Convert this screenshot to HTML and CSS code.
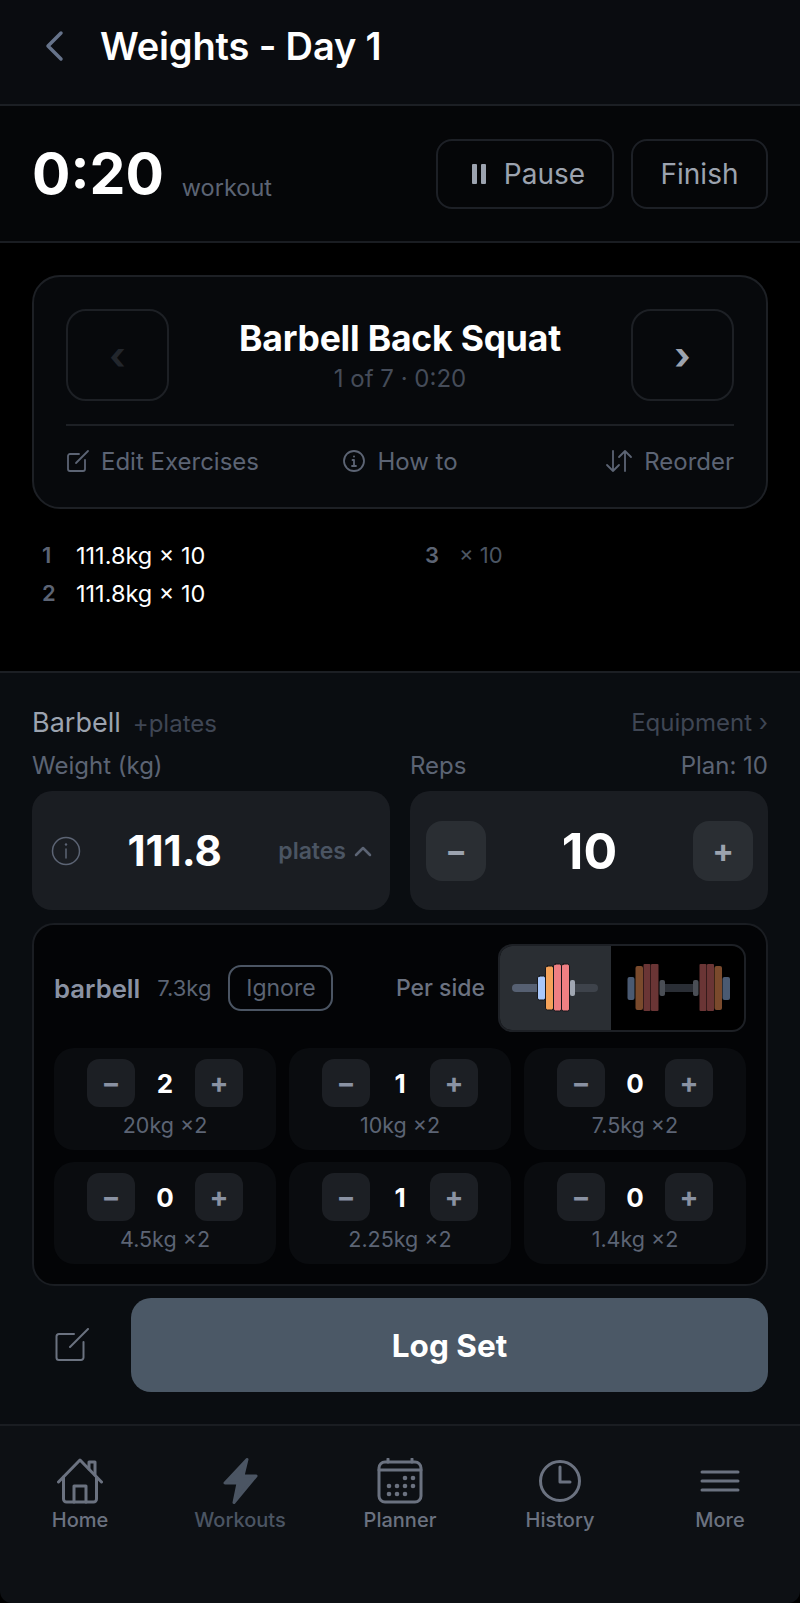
FILE: index.html
```html
<!DOCTYPE html>
<html lang="en">

<head>
    <meta charset="UTF-8">
    <meta name="viewport" content="width=device-width, initial-scale=1.0">
    <title>Weights - Day 1</title>

    <link rel="stylesheet" href="styles.css">
</head>

<body>
    <div class="app">
        <header class="topbar">
            <svg class="back-icon" width="20" height="32" viewBox="0 0 20 32"><path d="M17 3 L4 16 L17 29"/></svg>
            <h1>Weights - Day 1</h1>
        </header>

        <section class="timer-row">
            <div class="timer">
                <span class="timer-value">0:20</span>
                <span class="timer-label">workout</span>
            </div>
            <div class="timer-actions">
                <button class="outline-btn pause-btn"><span class="pause-icon"><i></i><i></i></span>Pause</button>
                <button class="outline-btn finish-btn">Finish</button>
            </div>
        </section>

        <main class="exercise-area">
            <div class="exercise-card">
                <div class="exercise-head">
                    <button class="nav-btn prev">‹</button>
                    <div class="exercise-title">
                        <h2>Barbell Back Squat</h2>
                        <p>1 of 7 · 0:20</p>
                    </div>
                    <button class="nav-btn next">›</button>
                </div>
                <div class="exercise-links">
                    <span class="link">
                        <svg width="24" height="24" viewBox="0 0 24 24"><path d="M13 5 H4 A2 2 0 0 0 2 7 V20 A2 2 0 0 0 4 22 H17 A2 2 0 0 0 19 20 V11"/><path d="M10 14 L22 2"/></svg>
                        Edit Exercises
                    </span>
                    <span class="link">
                        <svg width="24" height="24" viewBox="0 0 24 24"><circle cx="12" cy="12" r="10"/><path d="M12 11 V17 M10 17 H14 M10.500 11 H12"/><circle class="dot" cx="12" cy="7.500" r="1"/></svg>
                        How to
                    </span>
                    <span class="link link-right">
                        <svg width="28" height="24" viewBox="0 0 28 24"><path d="M8 2 V22 M2 16 L8 22 L14 16"/><path d="M20 22 V2 M14 8 L20 2 L26 8"/></svg>
                        Reorder
                    </span>
                </div>
            </div>

            <div class="sets">
                <div class="set"><span class="set-num">1</span><span class="set-val">111.8kg × 10</span></div>
                <div class="set"><span class="set-num">3</span><span class="set-val muted">× 10</span></div>
                <div class="set"><span class="set-num">2</span><span class="set-val">111.8kg × 10</span></div>
            </div>
        </main>

        <section class="log-panel">
            <div class="equip-row">
                <div><span class="equip-name">Barbell</span><span class="equip-extra">+plates</span></div>
                <span class="equip-link">Equipment ›</span>
            </div>

            <div class="inputs">
                <div class="input-col">
                    <div class="input-label"><span>Weight (kg)</span></div>
                    <div class="input-box weight-box">
                        <svg class="info-icon" width="30" height="30" viewBox="0 0 30 30"><circle cx="15" cy="15" r="13.500"/><path d="M15 13 V22"/><circle class="dot" cx="15" cy="8.500" r="1.200"/></svg>
                        <span class="weight-value">111.8</span>
                        <span class="plates-toggle">plates
                            <svg width="18" height="12" viewBox="0 0 18 12"><path d="M2 10 L9 3 L16 10"/></svg>
                        </span>
                    </div>
                </div>
                <div class="input-col">
                    <div class="input-label"><span>Reps</span><span>Plan: 10</span></div>
                    <div class="input-box reps-box">
                        <button class="step-btn">−</button>
                        <span class="reps-value">10</span>
                        <button class="step-btn">+</button>
                    </div>
                </div>
            </div>

            <div class="plates-card">
                <div class="plates-head">
                    <div class="bar-info">
                        <span class="bar-name">barbell</span>
                        <span class="bar-weight">7.3kg</span>
                        <button class="ignore-btn">Ignore</button>
                    </div>
                    <div class="side-info">
                        <span class="side-label">Per side</span>
                        <div class="side-toggle">
                            <div class="side-opt active">
                                <svg width="113" height="88" viewBox="0 0 113 88">
                                    <rect x="14" y="40" width="30" height="8" rx="4" fill="#566072" stroke="none"/>
                                    <rect x="70" y="40" width="30" height="8" rx="4" fill="#3e434b" stroke="none"/>
                                    <rect x="39.500" y="32" width="8" height="24" rx="2" fill="#a9c8fb"/>
                                    <rect x="47.500" y="22" width="8" height="44" rx="2" fill="#f4a259"/>
                                    <rect x="55.500" y="20" width="8" height="47" rx="2" fill="#ee7f83"/>
                                    <rect x="63.500" y="20" width="8" height="47" rx="2" fill="#ee7f83"/>
                                    <rect x="72" y="36" width="5" height="16" rx="2" fill="#a0a6b2" stroke="none"/>
                                </svg>
                            </div>
                            <div class="side-opt">
                                <svg width="134" height="88" viewBox="0 0 134 88">
                                    <rect x="50" y="40" width="36" height="8" fill="#2a2e35"/>
                                    <rect x="16.500" y="33" width="7" height="23" rx="2" fill="#4a5a72"/>
                                    <rect x="24.500" y="22" width="7.500" height="44" rx="2" fill="#7a4a2c"/>
                                    <rect x="32.500" y="20" width="7" height="47" rx="1" fill="#6a3535"/>
                                    <rect x="40" y="20" width="7.500" height="47" rx="1" fill="#6a3535"/>
                                    <rect x="48.500" y="36" width="5.500" height="16" rx="2" fill="#4a4e55"/>
                                    <rect x="82" y="36" width="5.500" height="16" rx="2" fill="#4a4e55"/>
                                    <rect x="88.500" y="20" width="7" height="47" rx="1" fill="#6a3535"/>
                                    <rect x="96" y="20" width="7" height="47" rx="1" fill="#6a3535"/>
                                    <rect x="103.500" y="22" width="7.500" height="44" rx="2" fill="#7a4a2c"/>
                                    <rect x="111.500" y="33" width="7.500" height="23" rx="2" fill="#4a5a72"/>
                                </svg>
                            </div>
                        </div>
                    </div>
                </div>

                <div class="plates-grid">
                    <div class="plate">
                        <div class="plate-ctrl"><button class="mini-btn">−</button><span>2</span><button class="mini-btn">+</button></div>
                        <div class="plate-label">20kg ×2</div>
                    </div>
                    <div class="plate">
                        <div class="plate-ctrl"><button class="mini-btn">−</button><span>1</span><button class="mini-btn">+</button></div>
                        <div class="plate-label">10kg ×2</div>
                    </div>
                    <div class="plate">
                        <div class="plate-ctrl"><button class="mini-btn">−</button><span>0</span><button class="mini-btn">+</button></div>
                        <div class="plate-label">7.5kg ×2</div>
                    </div>
                    <div class="plate">
                        <div class="plate-ctrl"><button class="mini-btn">−</button><span>0</span><button class="mini-btn">+</button></div>
                        <div class="plate-label">4.5kg ×2</div>
                    </div>
                    <div class="plate">
                        <div class="plate-ctrl"><button class="mini-btn">−</button><span>1</span><button class="mini-btn">+</button></div>
                        <div class="plate-label">2.25kg ×2</div>
                    </div>
                    <div class="plate">
                        <div class="plate-ctrl"><button class="mini-btn">−</button><span>0</span><button class="mini-btn">+</button></div>
                        <div class="plate-label">1.4kg ×2</div>
                    </div>
                </div>
            </div>

            <div class="log-row">
                <button class="note-btn">
                    <svg width="34" height="34" viewBox="0 0 34 34"><path d="M19 6 H4 A2.500 2.500 0 0 0 1.500 8.500 V29.500 A2.500 2.500 0 0 0 4 32 H26 A2.500 2.500 0 0 0 28.500 29.500 V14"/><path d="M15 19 L33 1"/></svg>
                </button>
                <button class="log-btn">Log Set</button>
            </div>
        </section>

        <nav class="tabbar">
            <a class="tab">
                <svg width="46" height="46" viewBox="0 0 46 46"><path d="M1.500 24 L23 2 L44.500 24"/><path d="M6.500 19 V41 A3 3 0 0 0 9.500 44 H36.500 A3 3 0 0 0 39.500 41 V19"/><path d="M17 44 V28 H29 V44"/><path d="M32 11 V4 H38 V17"/></svg>
                Home
            </a>
            <a class="tab dim">
                <svg width="46" height="46" viewBox="0 0 46 46"><path class="solid" d="M30 1.500 L8 25 H21 L17 44.500 L39 18 H26 Z"/></svg>
                Workouts
            </a>
            <a class="tab">
                <svg width="46" height="46" viewBox="0 0 46 46"><rect x="2" y="4" width="42" height="40" rx="6"/><path d="M2 12 H44 M11 1 V4 M35 1 V4"/><g class="dots"><circle cx="28" cy="20" r="2.300"/><circle cx="36" cy="20" r="2.300"/><circle cx="12" cy="28" r="2.300"/><circle cx="20" cy="28" r="2.300"/><circle cx="28" cy="28" r="2.300"/><circle cx="36" cy="28" r="2.300"/><circle cx="12" cy="36" r="2.300"/><circle cx="20" cy="36" r="2.300"/><circle cx="28" cy="36" r="2.300"/></g></svg>
                Planner
            </a>
            <a class="tab">
                <svg width="46" height="46" viewBox="0 0 46 46"><circle cx="23" cy="23" r="19.500"/><path d="M23 9 V24 H33"/></svg>
                History
            </a>
            <a class="tab">
                <svg width="46" height="46" viewBox="0 0 46 46"><path d="M5 14 H41 M5 23 H41 M5 32 H41"/></svg>
                More
            </a>
        </nav>
    </div>
</body>

</html>
```

FILE: styles.css
```css
* {
    box-sizing: border-box;
}

html,
body {
    margin: 0;
    background: #000;
}

body {
    font-family: Inter, "Liberation Sans", sans-serif;
    color: #fff;
}

button {
    font-family: inherit;
    background: none;
    border: none;
    padding: 0;
    color: inherit;
}

svg {
    fill: none;
    stroke: currentColor;
    stroke-linecap: round;
    stroke-linejoin: round;
    display: block;
}

svg .dot,
svg .dots {
    fill: currentColor;
    stroke: none;
}

.app {
    width: 800px;
    height: 1603px;
    display: flex;
    flex-direction: column;
    overflow: hidden;
}

.topbar {
    height: 106px;
    flex: none;
    display: flex;
    align-items: center;
    padding: 0 0 12px 44px;
    gap: 36px;
    background: #0a0c10;
    border-bottom: 2px solid #1c1f24;
}

.back-icon {
    color: #66738a;
    stroke-width: 3.500;
}

.topbar h1 {
    margin: 0;
    font-size: 38px;
    font-weight: 600;
    letter-spacing: -0.15px;
}

.timer-row {
    height: 137px;
    flex: none;
    display: flex;
    align-items: center;
    justify-content: space-between;
    padding: 0 32px;
    background: #050608;
    border-bottom: 2px solid #1a1d22;
}

.timer {
    display: flex;
    align-items: baseline;
    gap: 18px;
}

.timer-value {
    font-size: 57px;
    font-weight: 700;
}

.timer-label {
    font-size: 23.500px;
    color: #5c6474;
    transform: translateY(2px);
}

.timer-actions {
    display: flex;
    gap: 17px;
}

.outline-btn {
    height: 70px;
    border: 2px solid #1d2026;
    border-radius: 16px;
    font-size: 28px;
    color: #9ca3af;
    display: flex;
    align-items: center;
    justify-content: center;
}

.pause-btn {
    width: 178px;
    gap: 18px;
    padding-left: 7px;
}

.finish-btn {
    width: 137px;
}

.pause-icon {
    display: flex;
    gap: 4px;
}

.pause-icon i {
    width: 5px;
    height: 20px;
    background: #9ca3af;
    border-radius: 1px;
}

.exercise-area {
    height: 428px;
    flex: none;
    padding: 32px 32px 0;
    background: #000;
}

.exercise-card {
    height: 234px;
    border: 2px solid #1d2025;
    border-radius: 28px;
    background: #07090c;
    padding: 32px 32px 0;
}

.exercise-head {
    display: flex;
    justify-content: space-between;
    height: 117px;
    border-bottom: 2px solid #1d2025;
}

.nav-btn {
    width: 103px;
    height: 92px;
    border: 2px solid #1d2025;
    border-radius: 20px;
    font-size: 38px;
    font-weight: 700;
    line-height: 80px;
}

.nav-btn.prev {
    color: #22262c;
}

.nav-btn.next {
    color: #9ca3af;
}

.exercise-title {
    text-align: center;
    padding-top: 9px;
}

.exercise-title h2 {
    margin: 0;
    font-size: 35.500px;
    line-height: 42px;
    font-weight: 700;
    letter-spacing: -0.2px;
}

.exercise-title p {
    margin: 0;
    font-size: 24px;
    line-height: 38px;
    color: #454c59;
}

.exercise-links {
    display: grid;
    grid-template-columns: 1fr auto 1fr;
    align-items: center;
    height: 70px;
}

.link {
    display: flex;
    align-items: center;
    gap: 11px;
    font-size: 24px;
    color: #5c6474;
}

.link-right {
    justify-content: flex-end;
}

.link svg {
    stroke-width: 1.800;
}

.sets {
    display: grid;
    grid-template-columns: 383px 1fr;
    padding: 27px 0 0 10px;
}

.set {
    height: 38px;
    display: flex;
    align-items: center;
    font-size: 23.500px;
}

.set-num {
    width: 34px;
    font-size: 22px;
    font-weight: 600;
    color: #5c6474;
}

.set-val.muted {
    font-size: 22px;
    color: #4b5563;
}

.log-panel {
    height: 753px;
    flex: none;
    background: #0a0d11;
    border-top: 2px solid #1c1f24;
    padding: 29px 32px 0;
}

.equip-row {
    display: flex;
    justify-content: space-between;
    align-items: center;
    height: 40px;
}

.equip-name {
    font-size: 27px;
    color: #9ca3af;
    margin-right: 12px;
}

.equip-extra,
.equip-link {
    font-size: 24px;
    color: #3f4654;
}

.inputs {
    display: grid;
    grid-template-columns: 358px 358px;
    gap: 20px;
    margin-top: 2px;
}

.input-label {
    height: 47px;
    padding-bottom: 4px;
    display: flex;
    justify-content: space-between;
    align-items: center;
    font-size: 24px;
    color: #5c6474;
}

.input-box {
    height: 119px;
    background: #1a1d22;
    border-radius: 20px;
    display: flex;
    align-items: center;
    justify-content: space-between;
}

.weight-box {
    padding: 0 18px 0 19px;
}

.info-icon {
    color: #5c6474;
    stroke-width: 1.500;
}

.weight-value {
    font-size: 42px;
    font-weight: 700;
    margin-right: 10px;
}

.plates-toggle {
    display: flex;
    align-items: center;
    gap: 8px;
    font-size: 23px;
    font-weight: 600;
    color: #4b5563;
}

.plates-toggle svg {
    stroke-width: 2.500;
    color: #5c6474;
}

.reps-box {
    padding: 0 15px 0 16px;
}

.reps-value {
    font-size: 50px;
    font-weight: 700;
}

.step-btn {
    width: 60px;
    height: 60px;
    background: #2a2e33;
    border-radius: 16px;
    font-size: 32px;
    font-weight: 700;
    color: #9ca3af;
}

.plates-card {
    height: 363px;
    margin-top: 13px;
    border: 2px solid #1a1d22;
    border-radius: 22px;
    background: #030406;
    padding: 19px 20px 0;
}

.plates-head {
    display: flex;
    justify-content: space-between;
    align-items: center;
    height: 88px;
}

.bar-info,
.side-info {
    display: flex;
    align-items: center;
}

.bar-name {
    font-size: 25.700px;
    font-weight: 600;
    color: #8a92a3;
    margin-right: 17px;
}

.bar-weight {
    font-size: 22px;
    color: #5c6474;
    margin-right: 17px;
}

.ignore-btn {
    width: 105px;
    height: 46px;
    border: 2px solid #4b5563;
    border-radius: 13px;
    font-size: 23px;
    color: #5c6474;
}

.side-label {
    font-size: 23px;
    font-weight: 500;
    color: #6b7280;
    margin-right: 13px;
}

.side-toggle {
    width: 248px;
    height: 88px;
    border: 2px solid #1d2025;
    border-radius: 14px;
    overflow: hidden;
    display: flex;
    background: #000;
}

.side-opt {
    margin: -2px 0;
}

.side-opt svg {
    stroke: none;
}

.side-opt.active {
    background: #2a2e33;
    margin-left: -2px;
}

.side-opt.active svg {
    stroke: #15171b;
    stroke-width: 1;
}

.plates-grid {
    display: grid;
    grid-template-columns: repeat(3, 222px);
    grid-auto-rows: 102px;
    column-gap: 13px;
    row-gap: 12px;
    margin-top: 16px;
}

.plate {
    background: #0a0c0f;
    border-radius: 20px;
    padding-top: 11px;
    text-align: center;
}

.plate-ctrl {
    display: flex;
    justify-content: center;
    align-items: center;
    font-size: 26px;
    font-weight: 700;
}

.plate-ctrl span {
    width: 60px;
}

.mini-btn {
    width: 48px;
    height: 48px;
    background: #1c1f24;
    border-radius: 12px;
    font-size: 28px;
    font-weight: 700;
    color: #8a92a3;
}

.plate-label {
    font-size: 21.500px;
    line-height: 36px;
    color: #5c6474;
}

.log-row {
    display: flex;
    align-items: center;
    margin-top: 12px;
    gap: 41px;
}

.note-btn {
    margin-left: 23px;
    color: #6b7280;
    width: 35px;
}

.note-btn svg {
    stroke-width: 2;
}

.log-btn {
    width: 637px;
    height: 94px;
    background: #4b5866;
    border-radius: 20px;
    font-size: 31.500px;
    font-weight: 700;
    color: #fff;
}

.tabbar {
    flex: 1;
    background: #0d1014;
    border-top: 2px solid #1a1d22;
    border-radius: 0 0 12px 12px;
    display: grid;
    grid-template-columns: repeat(5, 160px);
    padding-top: 32px;
}

.tab {
    display: flex;
    flex-direction: column;
    align-items: center;
    height: 90px;
    gap: 4px;
    font-size: 20px;
    font-weight: 500;
    color: #6b7280;
}

.tab svg {
    stroke-width: 3;
}

.tab.dim {
    color: #4b5563;
}

.tab .solid {
    fill: currentColor;
}
```
